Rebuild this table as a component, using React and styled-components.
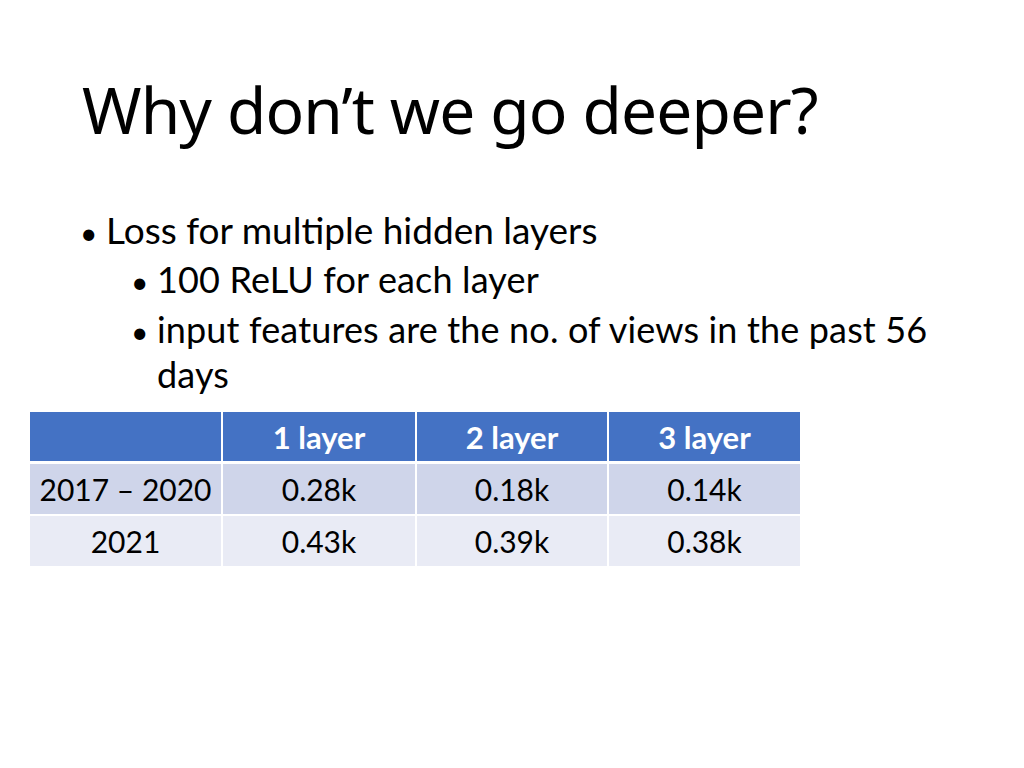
import styled, { createGlobalStyle } from 'styled-components';

const Global = createGlobalStyle`
  html, body {
    margin: 0;
    padding: 0;
    background: #ffffff;
  }
`;

const Slide = styled.div`
  width: 1024px;
  height: 768px;
  background: #ffffff;
  color: #000000;
  display: flex;
  flex-direction: column;
  overflow: hidden;
`;

const Title = styled.h1`
  margin: 0;
  padding: 72px 0 0 82px;
  font-family: 'Noto Sans', sans-serif;
  font-weight: 400;
  font-size: 64px;
  line-height: 76px;
  letter-spacing: -0.85px;
`;

const List = styled.ul`
  list-style: none;
  margin: 0;
  padding: 59px 66px 0 80px;
  font-family: Lato, 'Liberation Sans', sans-serif;
`;

const Item = styled.li`
  display: flex;
  align-items: baseline;
  padding-left: ${(p) => (p.level === 2 ? 51 : 0)}px;
  font-size: ${(p) => (p.level === 2 ? 36 : 37)}px;
  letter-spacing: ${(p) => (p.level === 2 ? 0.15 : 0)}px;
  line-height: 45px;
  margin-bottom: 5px;
`;

const Bullet = styled.span`
  flex: none;
  width: 26px;
  font-size: 30px;
  line-height: 1;
`;

const Table = styled.div`
  display: grid;
  grid-template-columns: 191px 192px 190px 191px;
  grid-template-rows: 49px 50px 50px;
  gap: 2.5px 2px;
  margin: 10px 0 0 30px;
  width: 770px;
  font-family: Lato, 'Liberation Sans', sans-serif;
`;

const Cell = styled.div`
  display: flex;
  align-items: center;
  justify-content: center;
  background: ${(p) => p.bg};
  color: ${(p) => (p.head ? '#ffffff' : '#000000')};
  font-weight: ${(p) => (p.head ? 700 : 400)};
  font-size: ${(p) => (p.head ? 31 : 30)}px;
`;

const rows = [
  { bg: '#4472c4', head: true, cells: ['', '1 layer', '2 layer', '3 layer'] },
  { bg: '#cfd5ea', cells: ['2017 – 2020', '0.28k', '0.18k', '0.14k'] },
  { bg: '#e9ebf5', cells: ['2021', '0.43k', '0.39k', '0.38k'] },
];

export default function App() {
  return (
    <Slide>
      <Global />
      <Title>Why don’t we go deeper?</Title>
      <List>
        <Item level={1}>
          <Bullet>•</Bullet>
          <span>Loss for multiple hidden layers</span>
        </Item>
        <Item level={2}>
          <Bullet>•</Bullet>
          <span>100 ReLU for each layer</span>
        </Item>
        <Item level={2}>
          <Bullet>•</Bullet>
          <span>input features are the no. of views in the past 56 days</span>
        </Item>
      </List>
      <Table>
        {rows.map((r, i) =>
          r.cells.map((c, j) => (
            <Cell key={`${i}-${j}`} bg={r.bg} head={r.head}>
              {c}
            </Cell>
          ))
        )}
      </Table>
    </Slide>
  );
}
